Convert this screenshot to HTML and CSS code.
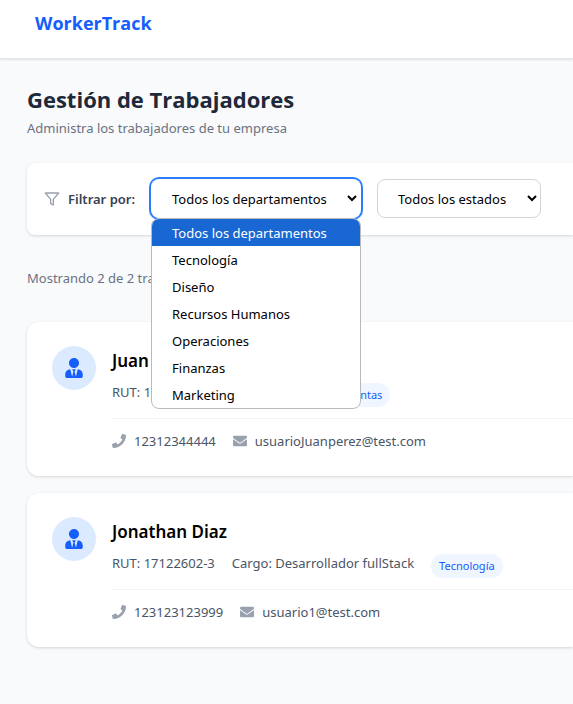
FILE: index.html
```html
<!DOCTYPE html>
<html lang="es">
<head>
<meta charset="utf-8">
<meta name="viewport" content="width=device-width, initial-scale=1">
<title>WorkerTrack</title>
<link rel="stylesheet" href="styles.css">
</head>
<body>
<svg class="sprite" aria-hidden="true">
  <symbol id="user" viewBox="0 0 448 512"><path d="M224 256c70.7 0 128-57.3 128-128S294.7 0 224 0 96 57.3 96 128s57.3 128 128 128zm95.8 32.6L272 480l-32-136 32-56h-96l32 56-32 136-47.8-191.4C56.9 292 0 350.3 0 422.4V464c0 26.5 21.5 48 48 48h352c26.5 0 48-21.5 48-48v-41.6c0-72.1-56.9-130.4-128.2-133.8z"/></symbol>
  <symbol id="phone" viewBox="0 0 512 512"><path d="M493.4 24.6l-104-24c-11.3-2.6-22.9 3.3-27.5 13.9l-48 112c-4.2 9.8-1.4 21.3 6.9 28l60.6 49.6c-36 76.7-98.9 140.5-177.2 177.2l-49.6-60.6c-6.8-8.3-18.2-11.1-28-6.9l-112 48C3.9 366.5-2 378.1.6 389.4l24 104C27.1 504.2 36.7 512 48 512c256.1 0 464-207.5 464-464 0-11.2-7.7-20.9-18.6-23.4z"/></symbol>
  <symbol id="mail" viewBox="0 0 512 512"><path d="M502.3 190.8c3.9-3.1 9.7-.2 9.7 4.7V400c0 26.5-21.5 48-48 48H48c-26.5 0-48-21.5-48-48V195.6c0-5 5.7-7.8 9.7-4.7 22.4 17.4 52.1 39.5 154.1 113.6 21.1 15.4 56.7 47.8 92.2 47.6 35.7.3 72-32.8 92.3-47.6 102-74.1 131.6-96.3 154-113.7zM256 320c23.2.4 56.6-29.2 73.4-41.4 132.7-96.3 142.8-104.7 173.4-128.7 5.8-4.5 9.2-11.5 9.2-18.9v-19c0-26.5-21.5-48-48-48H48c-26.5 0-48 21.5-48 48v19c0 7.4 3.4 14.3 9.2 18.9 30.6 23.9 40.7 32.4 173.4 128.7 16.8 12.2 50.2 41.8 73.4 41.4z"/></symbol>
</svg>
<header class="topbar"><a class="brand" href="#">WorkerTrack</a></header>
<main class="page">
  <h1 class="title">Gestión de Trabajadores</h1>
  <p class="subtitle">Administra los trabajadores de tu empresa</p>

  <section class="filters">
    <svg class="filter-icon" viewBox="0 0 24 24" aria-hidden="true"><polygon points="22 3 2 3 10 12.46 10 19 14 21 14 12.46 22 3"/></svg>
    <label class="filter-label" for="department">Filtrar por:</label>
    <div class="dropdown">
      <select class="select select-department is-open" id="department">
        <option>Todos los departamentos</option>
        <option>Tecnología</option>
        <option>Diseño</option>
        <option>Recursos Humanos</option>
        <option>Operaciones</option>
        <option>Finanzas</option>
        <option>Marketing</option>
      </select>
      <ul class="menu" role="listbox" aria-label="Departamentos">
        <li class="menu-item is-selected" role="option" aria-selected="true">Todos los departamentos</li>
        <li class="menu-item" role="option">Tecnología</li>
        <li class="menu-item" role="option">Diseño</li>
        <li class="menu-item" role="option">Recursos Humanos</li>
        <li class="menu-item" role="option">Operaciones</li>
        <li class="menu-item" role="option">Finanzas</li>
        <li class="menu-item" role="option">Marketing</li>
      </ul>
    </div>
    <select class="select select-status" id="status" aria-label="Estado">
      <option>Todos los estados</option>
    </select>
  </section>

  <p class="count">Mostrando 2 de 2 trabajadores</p>

  <div class="workers">
    <article class="worker">
      <div class="avatar"><svg class="avatar-icon" aria-hidden="true"><use href="#user"/></svg></div>
      <div class="worker-body">
        <h2 class="name">Juan Perez</h2>
        <div class="meta"><span>RUT: 1234567-9</span><span>Cargo: Ejecutivo</span><span class="badge">Ventas</span></div>
        <div class="contact">
          <span class="contact-item"><svg class="contact-icon" aria-hidden="true"><use href="#phone"/></svg>12312344444</span>
          <span class="contact-item"><svg class="contact-icon" aria-hidden="true"><use href="#mail"/></svg>usuarioJuanperez@test.com</span>
        </div>
      </div>
    </article>
    <article class="worker">
      <div class="avatar"><svg class="avatar-icon" aria-hidden="true"><use href="#user"/></svg></div>
      <div class="worker-body">
        <h2 class="name">Jonathan Diaz</h2>
        <div class="meta"><span>RUT: 17122602-3</span><span>Cargo: Desarrollador fullStack</span><span class="badge">Tecnología</span></div>
        <div class="contact">
          <span class="contact-item"><svg class="contact-icon" aria-hidden="true"><use href="#phone"/></svg>123123123999</span>
          <span class="contact-item"><svg class="contact-icon" aria-hidden="true"><use href="#mail"/></svg>usuario1@test.com</span>
        </div>
      </div>
    </article>
  </div>
</main>
</body>
</html>
```
FILE: styles.css
```css
* { box-sizing: border-box; }
body {
  margin: 0;
  background: #f9fafb;
  color: #4a5565;
  font: 13px/20px "Segoe UI", "Noto Sans", "Open Sans", sans-serif;
}
h1, h2, p, ul { margin: 0; padding: 0; }
.sprite { display: none; }

.topbar {
  padding: 8px 35px 20px;
  background: #fff;
  border-bottom: 1px solid #e5e7eb;
  box-shadow: 0 1px 2px rgba(0, 0, 0, .1);
}
.brand, .title { font-family: "Segoe UI", "Open Sans", "Noto Sans", sans-serif; font-weight: 700; }
.brand {
  display: block;
  color: #155dfc;
  font-size: 18px;
  line-height: 30px;
  text-decoration: none;
}

.page { padding: 24px 0 24px 27px; }
.title { color: #1e2939; font-size: 22px; line-height: 32px; }
.subtitle { margin-top: 3px; color: #6a7282; }

.filters {
  display: flex;
  align-items: center;
  gap: 16px;
  margin-top: 25px;
  padding: 16px 0 17px 17px;
  background: #fff;
  border-radius: 8px 0 0 8px;
  box-shadow: 0 1px 3px rgba(0, 0, 0, .15);
}
.filter-icon {
  width: 16px;
  height: 16px;
  margin-right: -8px;
  fill: none;
  stroke: #99a1af;
  stroke-width: 2;
  stroke-linecap: round;
  stroke-linejoin: round;
}
.filter-label { color: #364153; font-weight: 600; }
.dropdown { position: relative; }
.select {
  display: block;
  height: 39px;
  padding: 0 0 0 16px;
  border: 1px solid #d1d5dc;
  border-radius: 8px;
  background: #fff;
  color: #000;
  font: inherit;
}
.select-department { width: 210px; }
.select-status { width: 164px; }
.is-open { border-color: transparent; box-shadow: 0 0 0 2px #2b7fff; outline: none; }
.menu {
  position: absolute;
  top: 100%;
  left: 0;
  width: 100%;
  overflow: hidden;
  background: #fff;
  border: 1px solid #b8babd;
  border-radius: 8px;
  list-style: none;
}
.menu-item { padding: 1px 20px 0; color: #000; line-height: 26px; }
.menu-item.is-selected { background: #1967d2; color: #fff; }

.count { margin-top: 33px; color: #6a7282; }
.workers { display: grid; gap: 17px; margin-top: 34px; }
.worker {
  display: flex;
  gap: 16px;
  padding: 24px 0 25px 25px;
  background: #fff;
  border-radius: 12px 0 0 12px;
  box-shadow: 0 1px 3px rgba(0, 0, 0, .15);
}
.avatar {
  display: flex;
  flex: none;
  align-items: center;
  justify-content: center;
  width: 44px;
  height: 44px;
  border-radius: 50%;
  background: #dbeafe;
}
.avatar-icon { width: 20px; height: 20px; fill: #155dfc; }
.worker-body { flex: 1; min-width: 0; }
.name { color: #000; font-size: 17px; font-weight: 600; line-height: 30px; }
.meta { display: flex; gap: 17px; margin-top: 6px; }
.badge {
  margin-top: 1px;
  padding: 0 8px;
  border-radius: 12px;
  background: #eff6ff;
  color: #155dfc;
  font-size: 11px;
  line-height: 24px;
}
.contact {
  display: flex;
  gap: 17px;
  margin-top: 11px;
  padding-top: 12px;
  border-top: 1px solid #f3f4f6;
}
.contact-item { display: flex; align-items: center; gap: 8px; }
.contact-icon { width: 14px; height: 14px; fill: #99a1af; }
```
